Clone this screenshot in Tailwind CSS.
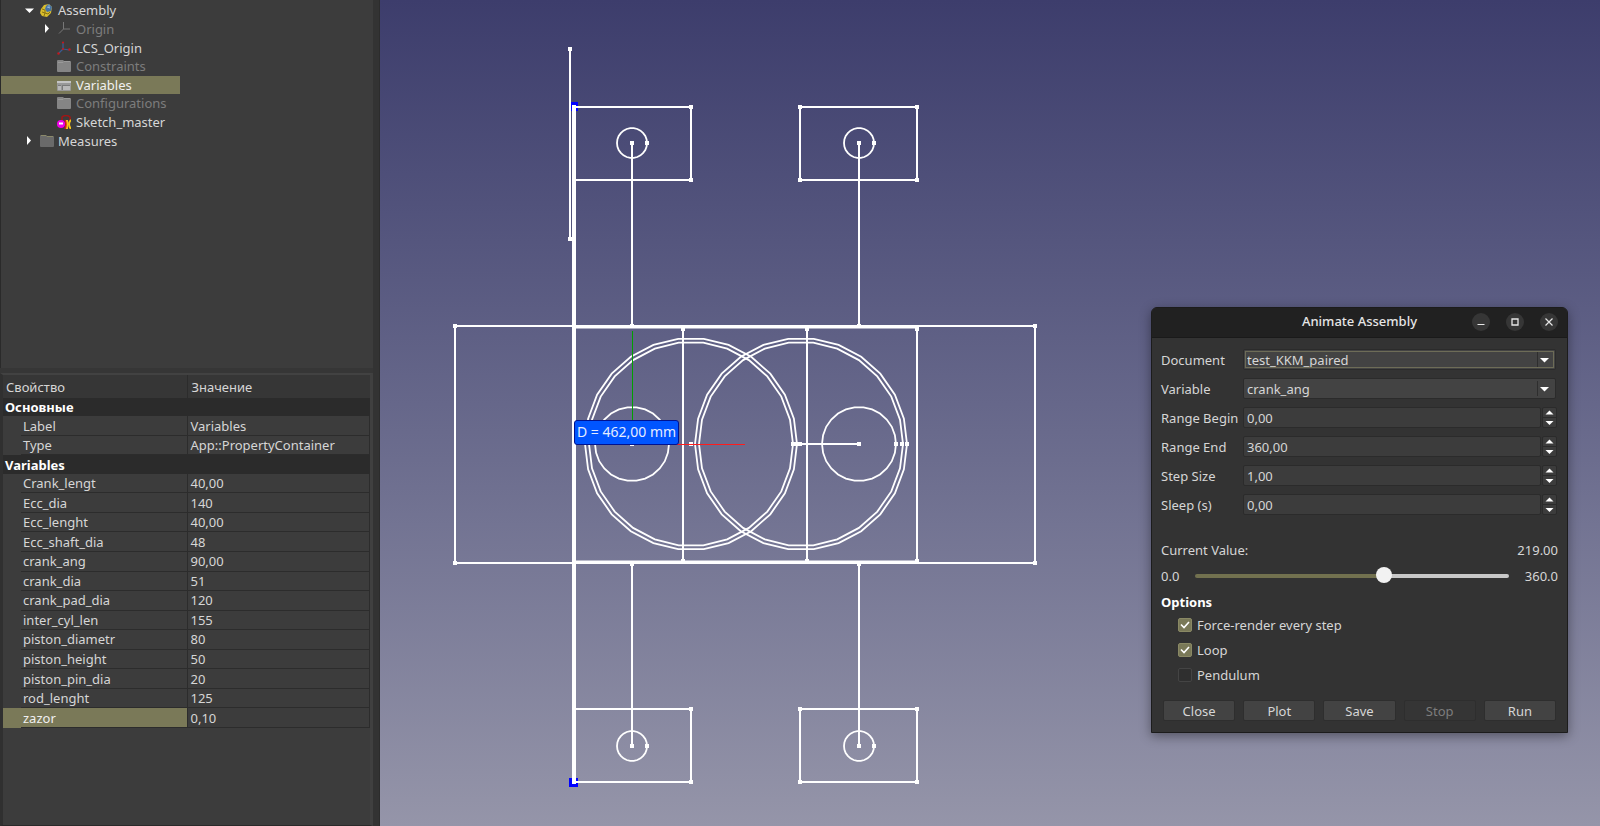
<!DOCTYPE html>
<html lang="ru">
<head>
  <meta charset="UTF-8" />
  <title>Animate Assembly</title>
  <script src="https://cdn.jsdelivr.net/npm/@tailwindcss/browser@4"></script>
</head>
<body class="flex h-screen overflow-hidden bg-[#333333] font-['Noto_Sans',sans-serif] text-[13px] leading-[18px] text-[#d6d6d6]">

  <!-- Left panel: model tree and properties -->
  <aside class="flex w-[380px] shrink-0 flex-col border-r border-[#2c2c2c] pr-[6px]">
    <div class="h-[368px] shrink-0 border-l border-[#2a2a2a] bg-[#3c3c3c] pt-px">
      <ul class="grid h-[149px] w-[179px] grid-rows-8">
        <li class="flex items-center pl-[24px]">
          <svg class="mr-[6px] size-[9px]" viewBox="0 0 9 9"><path d="M0 2.5h9L4.5 7z" fill="#fff" /></svg>
          <svg class="mr-[5px] size-[13px]" viewBox="0 0 13 13">
            <path d="M1 5 4 1l5-1 3 3-1 6-4 4-5-1-2-3z" fill="#d9bd2c" />
            <path d="M6 2 9 0l3 3-1 4-4 1-2-3z" fill="#4572a5" />
            <path d="M2 5l3 1v3l3 1 2-2M4 12l1-3-3-1" stroke="#8a7512" fill="none" />
            <path d="M7 3l3 1M9 1v3" stroke="#91b4d4" />
          </svg>
          <span>Assembly</span>
        </li>
        <li class="flex items-center pl-[42px] text-[#7d7d7d]">
          <svg class="mr-[6px] size-[9px]" viewBox="0 0 9 9"><path d="M2 0v9l4-4.500z" fill="#fff" /></svg>
          <svg class="mr-[5px] size-[13px]" viewBox="0 0 13 13"><path d="M5.500 0v7L1 11.500M5.500 7H12" stroke="#777" fill="none" /></svg>
          <span>Origin</span>
        </li>
        <li class="flex items-center pl-[56px]">
          <svg class="mr-[5px] size-[14px]" viewBox="0 0 14 14">
            <path d="M6 2v6L2 12M6 8l6 1" stroke="#3a5c94" stroke-width="1.200" fill="none" />
            <g fill="#c4181c"><circle cx="6" cy="1.500" r="1.100" /><circle cx="6" cy="8" r="1.100" /><circle cx="1.500" cy="12.500" r="1.200" /><circle cx="12.500" cy="8.500" r="1.200" /></g>
          </svg>
          <span>LCS_Origin</span>
        </li>
        <li class="flex items-center pl-[56px] text-[#7d7d7d]">
          <svg class="mr-[5px] size-[14px]" viewBox="0 0 14 14"><path d="M0 2q0-1 1-1h5l1 1h6q1 0 1 1v9q0 1-1 1H1q-1 0-1-1z" fill="#858585" /><path d="M1 3.500h5l1-1h6" stroke="#999" fill="none" /></svg>
          <span>Constraints</span>
        </li>
        <li class="flex items-center bg-[#7a7958] pl-[56px] text-[#f0f0f0]">
          <svg class="mr-[5px] size-[14px]" viewBox="0 0 14 14"><path d="M0 3h14v9q0 1-1 1H1q-1 0-1-1z" fill="#989898" /><path d="M0 3h14v2H0z" fill="#c4c4c4" /><path d="M1 7h3v1H1zM5 7h8v1H5zM5 8h1v4H5z" fill="#7a7a7a" /><path d="M6 8h7v4H6zM1 8h3v4H1z" fill="#b8b8b8" /></svg>
          <span>Variables</span>
        </li>
        <li class="flex items-center pl-[56px] text-[#7d7d7d]">
          <svg class="mr-[5px] size-[14px]" viewBox="0 0 14 14"><path d="M0 2q0-1 1-1h5l1 1h6q1 0 1 1v9q0 1-1 1H1q-1 0-1-1z" fill="#858585" /><path d="M1 3.500h5l1-1h6" stroke="#999" fill="none" /></svg>
          <span>Configurations</span>
        </li>
        <li class="flex items-center pl-[56px]">
          <svg class="mr-[5px] size-[14px]" viewBox="0 0 14 14">
            <path d="M5 5V2q4-3 8 0v3" stroke="#a31515" stroke-width="1.500" fill="none" />
            <circle cx="4" cy="9" r="4" fill="#f000e8" /><path d="M2 7.500h4v2H2z" fill="#fff" />
            <path d="M10 5v9M14 5q-4 4 0 9" stroke="#f5c518" stroke-width="2" fill="none" />
            <path d="M8 5q2 4 0 9" stroke="#d61a1a" stroke-width="1.500" fill="none" />
          </svg>
          <span>Sketch_master</span>
        </li>
        <li class="flex items-center pl-[24px]">
          <svg class="mr-[6px] size-[9px]" viewBox="0 0 9 9"><path d="M2 0v9l4-4.500z" fill="#fff" /></svg>
          <svg class="mr-[4px] size-[14px]" viewBox="0 0 14 14"><path d="M0 2q0-1 1-1h5l1 1h6q1 0 1 1v9q0 1-1 1H1q-1 0-1-1z" fill="#6a6a6a" /><path d="M1 1.500h5l1 1h6" stroke="#8b8a6a" fill="none" /></svg>
          <span>Measures</span>
        </li>
      </ul>
    </div>

    <!-- Splitter -->
    <div class="h-[5px] shrink-0 bg-[#363636]"></div>

    <div class="grow border-t-2 border-r-[3px] border-b border-l-[3px] border-t-[#424242] border-r-[#404040] border-b-[#2a2a2a] border-l-[#303030] bg-[#3c3c3c]">
      <table class="w-full table-fixed border-collapse">
        <thead>
          <tr class="h-[23px] bg-[#363636] text-left">
            <th class="w-[184px] border-r border-[#2c2c2c] pl-[3px] font-normal">Свойство</th>
            <th class="pl-[4px] font-normal">Значение</th>
          </tr>
        </thead>
      </table>
      <table class="h-[330px] w-full table-fixed border-collapse leading-[16px]">
        <colgroup><col class="w-[18px]" /><col class="w-[166px]" /><col /></colgroup>
        <tbody id="properties"></tbody>
      </table>
    </div>
  </aside>

  <!-- 3D view -->
  <main class="relative min-w-0 grow bg-linear-to-b from-[#3d3d6c] to-[#9595a9]">
    <svg class="size-full" viewBox="380 0 1220 826" fill="none" stroke="#fff" stroke-width="2">
      <path d="M571 102h7v9h-7zM569 778h9v9h-9z" stroke="none" fill="#00f" />
      <path d="M570 49V239" />
      <path d="M574 107V782" stroke-width="4" />
      <path d="M574 107H691V180H574M800 107H917V180H800zM574 709H691V782H574M800 709H917V782H800z" />
      <path d="M455 326H1035V563H455z" />
      <path d="M574 327H917M574 562H917" stroke-width="3" />
      <path d="M683 328V562M807 328V562M917 328V562" />
      <path d="M632 143V326M859 143V326M632 563V745M859 563V745" />
      <path d="M632 444H677M797 444H859" />
      <g id="circles"></g>
      <path d="M632.500 331V444" stroke="#00a000" stroke-width="1" />
      <g id="nodes" fill="#fff" stroke="none"></g>
      <path d="M632 444.500H745" stroke="#ff1c1c" stroke-width="1" />
    </svg>

    <!-- Dimension label -->
    <div class="absolute top-[420px] left-[194px] rounded-[3px] border border-[#00128f] bg-[#0055ff] px-[2px] pb-px text-[14px] leading-[22px] text-[#e4ecff]">D = 462,00 mm</div>
  </main>

  <!-- Animate dialog -->
  <section class="absolute top-[307px] right-[32px] w-[417px] rounded-t-[6px] border border-[#1c1c1c] bg-[#333333] shadow-[0_3px_12px_rgba(0,0,0,0.4)]">
    <header class="relative flex h-[30px] items-center justify-end gap-4 rounded-t-[5px] border-b border-[#1a1a1a] bg-[#212121] pr-[9px] pb-px">
      <h1 class="absolute inset-x-0 pb-[2px] text-center font-medium text-[#e6e6e6]">Animate Assembly</h1>
      <button aria-label="Minimize" class="relative size-[18px] rounded-full bg-[#363636]"><svg viewBox="0 0 18 18"><path d="M5.500 11.500h7" stroke="#e6e6e6" /></svg></button>
      <button aria-label="Maximize" class="relative size-[18px] rounded-full bg-[#363636]"><svg viewBox="0 0 18 18"><path d="M6 6h6v6H6z" stroke="#e6e6e6" stroke-width="1.300" fill="none" /></svg></button>
      <button aria-label="Close window" class="relative size-[18px] rounded-full bg-[#363636]"><svg viewBox="0 0 18 18"><path d="m5.500 5.500 7 7m0-7-7 7" stroke="#e6e6e6" stroke-width="1.200" /></svg></button>
    </header>

    <form class="px-[9px] pt-[11px] pb-[11px]">
      <div class="grid grid-cols-[82px_1fr] items-center gap-y-[8px]">
        <label for="document">Document</label>
        <div class="relative mr-[2px]">
          <select id="document" class="block h-[21px] w-full appearance-none rounded-[2px] border border-[#2b2b2b] bg-[#434343] pl-[3px] leading-[18px] outline outline-[#6d6c57] -outline-offset-3"><option>test_KKM_paired</option></select>
          <svg class="pointer-events-none absolute top-[3px] right-[7px] h-[15px] w-[12px]" viewBox="0 0 12 15"><path d="M.5 0v15" stroke="#2e2e2e" /><path d="M3 6h9l-4.500 4.500z" fill="#fff" /></svg>
        </div>
        <label for="variable">Variable</label>
        <div class="relative mr-[2px]">
          <select id="variable" class="block h-[21px] w-full appearance-none rounded-[2px] border border-[#2b2b2b] bg-[#434343] pl-[3px] leading-[18px]"><option>crank_ang</option></select>
          <svg class="pointer-events-none absolute top-[3px] right-[7px] h-[15px] w-[12px]" viewBox="0 0 12 15"><path d="M.5 0v15" stroke="#2e2e2e" /><path d="M3 6h9l-4.500 4.500z" fill="#fff" /></svg>
        </div>
        <label for="begin">Range Begin</label>
        <div class="mr-px flex gap-px">
          <input id="begin" value="0,00" class="h-[21px] min-w-0 grow rounded-[2px] border border-[#2b2b2b] bg-[#3c3c3c] pl-[3px]" />
          <svg class="h-[21px] w-[15px] rounded-[2px] border border-[#2b2b2b] bg-[#3c3c3c]" viewBox="0 0 13 19"><path d="M0 9.500h13" stroke="#2b2b2b" /><path d="M2.500 6.500h8l-4-4zM2.500 13h8l-4 4z" fill="#fff" /></svg>
        </div>
        <label for="end">Range End</label>
        <div class="mr-px flex gap-px">
          <input id="end" value="360,00" class="h-[21px] min-w-0 grow rounded-[2px] border border-[#2b2b2b] bg-[#3c3c3c] pl-[3px]" />
          <svg class="h-[21px] w-[15px] rounded-[2px] border border-[#2b2b2b] bg-[#3c3c3c]" viewBox="0 0 13 19"><path d="M0 9.500h13" stroke="#2b2b2b" /><path d="M2.500 6.500h8l-4-4zM2.500 13h8l-4 4z" fill="#fff" /></svg>
        </div>
        <label for="step">Step Size</label>
        <div class="mr-px flex gap-px">
          <input id="step" value="1,00" class="h-[21px] min-w-0 grow rounded-[2px] border border-[#2b2b2b] bg-[#3c3c3c] pl-[3px]" />
          <svg class="h-[21px] w-[15px] rounded-[2px] border border-[#2b2b2b] bg-[#3c3c3c]" viewBox="0 0 13 19"><path d="M0 9.500h13" stroke="#2b2b2b" /><path d="M2.500 6.500h8l-4-4zM2.500 13h8l-4 4z" fill="#fff" /></svg>
        </div>
        <label for="sleep">Sleep (s)</label>
        <div class="mr-px flex gap-px">
          <input id="sleep" value="0,00" class="h-[21px] min-w-0 grow rounded-[2px] border border-[#2b2b2b] bg-[#3c3c3c] pl-[3px]" />
          <svg class="h-[21px] w-[15px] rounded-[2px] border border-[#2b2b2b] bg-[#3c3c3c]" viewBox="0 0 13 19"><path d="M0 9.500h13" stroke="#2b2b2b" /><path d="M2.500 6.500h8l-4-4zM2.500 13h8l-4 4z" fill="#fff" /></svg>
        </div>
      </div>

      <div class="mt-[26px] flex justify-between">
        <label for="current">Current Value:</label>
        <output for="current">219.00</output>
      </div>
      <div class="mt-[8px] flex items-center justify-between">
        <span class="w-[34px]">0.0</span>
        <input id="current" type="range" min="0" max="360" value="219" class="h-[16px] min-w-0 grow appearance-none bg-transparent [&::-webkit-slider-runnable-track]:h-[4px] [&::-webkit-slider-runnable-track]:rounded-full [&::-webkit-slider-runnable-track]:bg-[linear-gradient(to_right,#72714f_60%,#c8c8c8_60%)] [&::-webkit-slider-thumb]:-mt-[7px] [&::-webkit-slider-thumb]:size-[16px] [&::-webkit-slider-thumb]:appearance-none [&::-webkit-slider-thumb]:rounded-full [&::-webkit-slider-thumb]:bg-[#f2f2f2]" />
        <span class="w-[49px] text-right">360.0</span>
      </div>

      <fieldset class="mt-[8px]">
        <legend class="font-bold text-white">Options</legend>
        <div class="flex flex-col gap-[7px] pt-[5px] pl-[17px]">
          <label class="flex items-center gap-[5px]">
            <span class="relative size-[14px]">
              <input type="checkbox" checked class="block size-[14px] appearance-none rounded-[2px] border border-[#444444] bg-[#2f2f2f] checked:border-[#8a8965] checked:bg-[#7a7958]" />
              <svg class="pointer-events-none absolute inset-0" viewBox="0 0 14 14"><path d="m3 6.500 3 3 5-5.500" stroke="#fff" stroke-width="1.600" fill="none" /></svg>
            </span>
            Force-render every step
          </label>
          <label class="flex items-center gap-[5px]">
            <span class="relative size-[14px]">
              <input type="checkbox" checked class="block size-[14px] appearance-none rounded-[2px] border border-[#444444] bg-[#2f2f2f] checked:border-[#8a8965] checked:bg-[#7a7958]" />
              <svg class="pointer-events-none absolute inset-0" viewBox="0 0 14 14"><path d="m3 6.500 3 3 5-5.500" stroke="#fff" stroke-width="1.600" fill="none" /></svg>
            </span>
            Loop
          </label>
          <label class="flex items-center gap-[5px]">
            <input type="checkbox" class="block size-[14px] appearance-none rounded-[2px] border border-[#444444] bg-[#2f2f2f]" />
            Pendulum
          </label>
        </div>
      </fieldset>

      <div class="mt-[16px] grid grid-cols-5 gap-[8px] px-[2px]">
        <button type="button" class="h-[21px] rounded-[2px] border border-[#2e2e2e] bg-[#434343]">Close</button>
        <button type="button" class="h-[21px] rounded-[2px] border border-[#2e2e2e] bg-[#434343]">Plot</button>
        <button type="button" class="h-[21px] rounded-[2px] border border-[#2e2e2e] bg-[#434343]">Save</button>
        <button type="button" disabled class="h-[21px] rounded-[2px] border border-[#2e2e2e] bg-[#353535] text-[#7d7d7d]">Stop</button>
        <button type="button" class="h-[21px] rounded-[2px] border border-[#2e2e2e] bg-[#434343]">Run</button>
      </div>
    </form>
  </section>

  <script>
    // Rows without a value are group headings
    const properties = [
      ["Основные"],
      ["Label", "Variables"],
      ["Type", "App::PropertyContainer"],
      ["Variables"],
      ["Crank_lengt", "40,00"],
      ["Ecc_dia", "140"],
      ["Ecc_lenght", "40,00"],
      ["Ecc_shaft_dia", "48"],
      ["crank_ang", "90,00"],
      ["crank_dia", "51"],
      ["crank_pad_dia", "120"],
      ["inter_cyl_len", "155"],
      ["piston_diametr", "80"],
      ["piston_height", "50"],
      ["piston_pin_dia", "20"],
      ["rod_lenght", "125"],
      ["zazor", "0,10"]
    ];

    document.getElementById("properties").innerHTML = properties.map(([name, value]) => {
      if (value === undefined) {
        return `<tr class="bg-[#2b2b2b]"><th colspan="3" class="py-0 pl-[2px] text-left font-bold text-white">${name}</th></tr>`;
      }
      const selected = name === "zazor" ? "bg-[#7a7958] text-[#f0f0f0]" : "";
      return `
        <tr>
          <td class="p-0 ${selected}"></td>
          <td class="border-r border-b border-[#2c2c2c] py-0 pl-[2px] ${selected}">${name}</td>
          <td class="border-r border-b border-[#2c2c2c] py-0 pl-[3px]">${value}</td>
        </tr>
      `;
    }).join("");

    // Circles are drawn as polygons, the way the viewer tessellates them
    const circles = [
      [632, 143, 15], [859, 143, 15], [632, 746, 15], [859, 746, 15],
      [632, 444, 37], [859, 444, 37],
      [691, 444, 106], [691, 444, 102], [801, 444, 106], [801, 444, 102]
    ];
    const segments = 26;

    document.getElementById("circles").innerHTML = circles.map(([cx, cy, r]) => {
      const points = [];
      for (let i = 0; i < segments; i++) {
        const a = (i * 2 * Math.PI) / segments;
        points.push((cx + r * Math.cos(a)).toFixed(1) + "," + (cy + r * Math.sin(a)).toFixed(1));
      }
      return `<polygon points="${points.join(" ")}" stroke-width="1.8" />`;
    }).join("");

    const nodes = [
      [570, 49], [570, 239], [574, 107], [691, 107], [691, 180], [800, 107], [917, 107], [800, 180], [917, 180],
      [632, 143], [647, 143], [859, 143], [874, 143], [632, 746], [647, 746], [859, 746], [874, 746],
      [574, 782], [691, 709], [691, 782], [800, 709], [917, 709], [800, 782], [917, 782],
      [455, 326], [1035, 326], [455, 563], [1035, 563],
      [683, 329], [807, 329], [917, 329], [683, 561], [807, 561], [917, 561],
      [632, 326], [859, 326], [632, 564], [859, 564],
      [632, 444], [691, 444], [793, 444], [797, 444], [800, 444], [859, 444], [896, 444], [902, 444], [907, 444]
    ];
    document.getElementById("nodes").innerHTML = nodes
      .map(([x, y]) => `<rect x="${x - 2}" y="${y - 2}" width="4" height="4" />`)
      .join("");
  </script>
</body>
</html>
